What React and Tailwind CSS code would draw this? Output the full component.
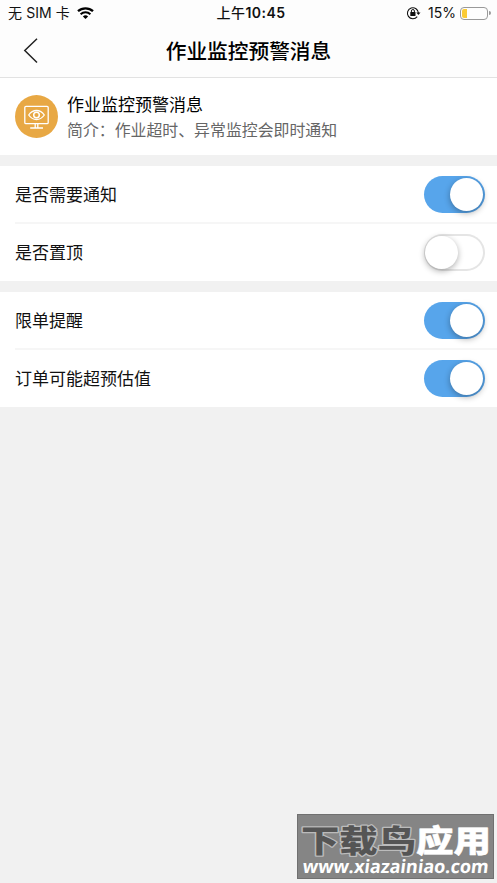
const cjk = "font-['Inter','Noto_Sans_CJK_SC',sans-serif]";

function WifiIcon() {
  return (
    <svg className="h-[13px] w-[17px]" viewBox="0 0 17 13" fill="none" stroke="#000">
      <path d="M1 4.2C5.2.3 11.8.3 16 4.2" strokeWidth="2.3" />
      <path d="M3.6 7.2c2.8-2.5 7-2.5 9.8 0" strokeWidth="2" />
      <path d="M5.9 9.4c1.4-1.4 3.8-1.4 5.2 0L8.5 12Z" fill="#000" stroke="none" />
    </svg>
  );
}

function RotationLockIcon() {
  return (
    <svg className="h-[14px] w-[15px]" viewBox="0 0 15 14" fill="none" stroke="#111">
      <path d="M11.2 10.7A5.5 5.5 0 1 1 12.4 7" strokeWidth="1.1" />
      <path d="M10.3 6.4h4.2l-2.1 2.7Z" fill="#111" stroke="none" />
      <rect x="4.3" y="6" width="5.2" height="4" rx=".5" fill="#111" stroke="none" />
      <path d="M5.4 6.3V5a1.5 1.5 0 0 1 3 0v1.3" strokeWidth="1" />
    </svg>
  );
}

function StatusBar() {
  return (
    <div className="grid h-[26px] grid-cols-3 items-center text-[14px] leading-none text-[#111]">
      <div className="flex items-center gap-[7px] pl-2">
        <span className="whitespace-nowrap tracking-[0.1px]">无 SIM 卡</span>
        <WifiIcon />
      </div>
      <span className="pl-[5px] text-center font-medium tracking-[0.45px]">上午<b className="font-semibold">10:45</b></span>
      <div className="flex items-center justify-end pr-[6px]">
        <RotationLockIcon />
        <span className="mr-1 ml-[7px]">15%</span>
        <div className="flex h-[13px] w-[28px] rounded-[4px] border border-[#999] p-[1px]">
          <div className="w-[5px] rounded-l-[2px] bg-[#fbcb36]" />
        </div>
        <div className="ml-px h-[4px] w-[2px] rounded-r-full bg-[#999]" />
      </div>
    </div>
  );
}

function MonitorIcon() {
  return (
    <svg className="size-[43px] shrink-0" viewBox="0 0 43 43" fill="none" stroke="#fff" strokeWidth="1.3">
      <circle cx="21.5" cy="21.5" r="21.5" fill="#e8a844" stroke="none" />
      <rect x="9.8" y="11.4" width="23.4" height="17.2" rx="1.2" />
      <path d="M13.7 20c4-6 11.6-6 15.6 0-4 6-11.6 6-15.6 0Z" />
      <circle cx="21.5" cy="20" r="2.8" strokeWidth="1.5" />
      <path d="M20.2 28.6v4M22.8 28.6v4M15.2 33h12.8" />
    </svg>
  );
}

function Toggle({ on }) {
  return (
    <div
      className={
        on
          ? "flex h-[37px] w-[61px] items-center justify-end rounded-full bg-[#57a5eb] pr-[2px]"
          : "flex h-[37px] w-[61px] items-center rounded-full bg-white pl-px inset-ring-2 inset-ring-[#e5e5e5]"
      }
    >
      <div className="size-[33px] rounded-full bg-white shadow-[0_2px_6px_rgba(0,0,0,0.32)]" />
    </div>
  );
}

function Row({ label, on, divided }) {
  return (
    <div className="pl-[15px]">
      <div
        className={
          divided
            ? "flex h-[58px] items-center justify-between border-b-2 border-[#f6f6f6] pt-px pr-3"
            : "flex h-[57px] items-center justify-between pr-3 pb-px"
        }
      >
        <span className="pt-[2px] text-[17px] leading-[25px] text-[#111]">{label}</span>
        <Toggle on={on} />
      </div>
    </div>
  );
}

function Watermark() {
  return (
    <div className="absolute top-[814px] left-[297px] h-[65px] w-[197px] border border-[#707070] bg-[#858585]">
      <svg className="block h-full w-full" viewBox="0 0 195 63">
        <g
          fontFamily="'Noto Sans CJK SC', sans-serif"
          fontWeight="900"
          fontSize="31"
          strokeLinejoin="round"
          paintOrder="stroke"
        >
          <text x="3" y="36.5" textLength="115" lengthAdjust="spacingAndGlyphs" fill="#555" stroke="#bbb" strokeWidth="2.5">下载鸟</text>
          <text x="118" y="36.5" textLength="75" lengthAdjust="spacingAndGlyphs" fill="#fff" stroke="#fff" strokeWidth=".5">应用</text>
        </g>
        <text transform="translate(4 57.5) skewX(-7)" textLength="186" lengthAdjust="spacingAndGlyphs" fill="#fff" fontFamily="'Open Sans', sans-serif" fontWeight="700" fontSize="18.5">www.xiazainiao.com</text>
      </svg>
    </div>
  );
}

export default function App() {
  return (
    <div className={`relative h-[883px] w-[497px] overflow-hidden bg-[#f1f1f1] ${cjk}`}>
      <header className="h-[78px] border-b border-[#e2e2e2] bg-[#fdfdfd]">
        <StatusBar />
        <div className="grid h-[49px] grid-cols-[60px_1fr_60px] items-center">
          <svg className="ml-[23px] h-[26px] w-[16px]" viewBox="0 0 16 26" fill="none" stroke="#222" strokeWidth="1.5">
            <path d="M14 .8 1.8 12.5 14 24.5" />
          </svg>
          <h1 className="pt-[2px] text-center text-[20.7px] leading-7 font-medium text-black">作业监控预警消息</h1>
        </div>
      </header>
      <section className="flex h-[77px] items-center gap-[9px] bg-white pl-[15px]">
        <MonitorIcon />
        <div className="pt-[2px]">
          <h2 className="text-[17px] leading-[26px] text-black">作业监控预警消息</h2>
          <p className="text-[15.9px] leading-[26px] text-[#666]">简介：作业超时、异常监控会即时通知</p>
        </div>
      </section>
      <section className="mt-[11px] bg-white">
        <Row label="是否需要通知" on divided />
        <Row label="是否置顶" />
      </section>
      <section className="mt-[11px] bg-white">
        <Row label="限单提醒" on divided />
        <Row label="订单可能超预估值" on />
      </section>
      <Watermark />
    </div>
  );
}
